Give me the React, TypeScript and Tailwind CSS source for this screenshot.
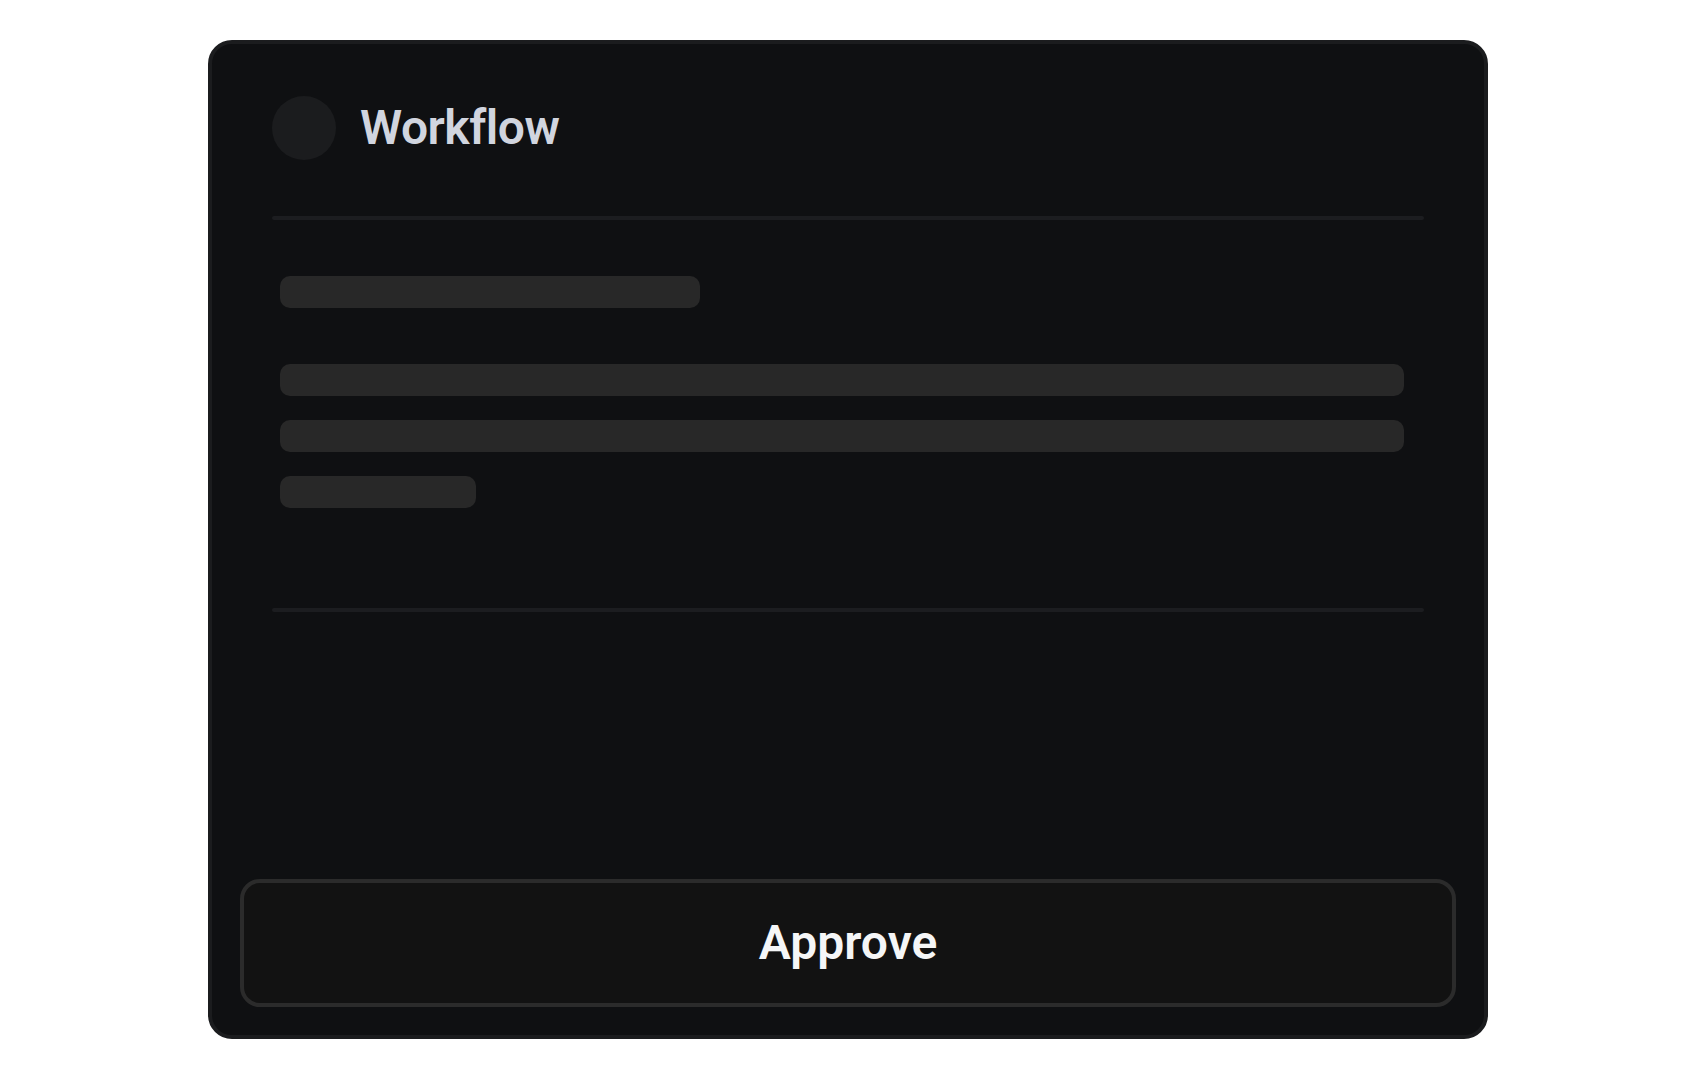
import React from "react";

export default function App() {
  return (
    <div className="min-h-screen bg-white flex justify-center pt-[40px]" style={{ fontFamily: "Roboto, 'Noto Sans', sans-serif" }}>
      <div className="w-[1280px] h-[999px] rounded-[24px] border-4 border-[#1b1c1e] bg-[#0f1012] flex flex-col">
        <div className="px-[60px] pt-[52px]">
          <div className="flex items-center gap-[24px] h-[64px]">
            <div className="w-16 h-16 rounded-full bg-[#1b1c1e]" />
            <div className="text-[48px] font-semibold text-[#d1d5df] leading-none tracking-[-0.5px]">Workflow</div>
          </div>
          <div className="mt-[56px] h-[4px] rounded-full bg-[#1c1d20]" />
          <div className="pl-2 pr-5 pt-[56px] flex flex-col">
            <div className="w-[420px] h-8 rounded-[10px] bg-[#282828]" />
            <div className="mt-[56px] w-full h-8 rounded-[10px] bg-[#282828]" />
            <div className="mt-[24px] w-full h-8 rounded-[10px] bg-[#282828]" />
            <div className="mt-[24px] w-[196px] h-8 rounded-[10px] bg-[#282828]" />
          </div>
          <div className="mt-[100px] h-[4px] rounded-full bg-[#1c1d20]" />
        </div>
        <div className="mt-auto px-[28px] pb-[28px]">
          <button className="w-full h-[128px] rounded-[20px] border-4 border-[#2b2b2b] bg-[#121212] text-[48px] font-semibold text-[#f5f6f7] leading-none">
            Approve
          </button>
        </div>
      </div>
    </div>
  );
}
